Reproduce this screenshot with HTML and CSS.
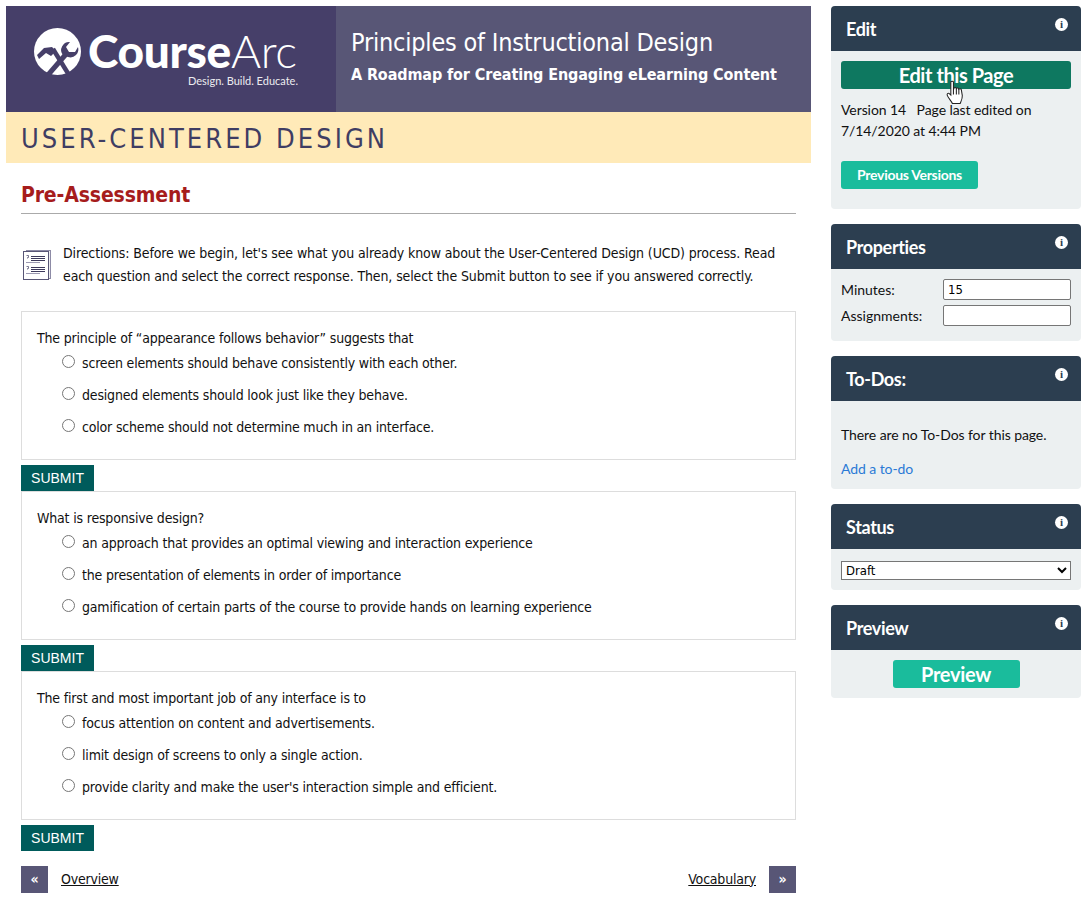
FILE: index.html
```html
<!DOCTYPE html>
<html lang="en">
<head>
    <meta charset="UTF-8">
    <meta name="viewport" content="width=device-width, initial-scale=1.0">
    <title>User-Centered Design</title>
    <link rel="stylesheet" href="styles.css">
</head>
<body>
    <main class="content">
        <header class="banner">
            <div class="logo-block">
                <svg class="logo-mark" viewBox="0 0 47 47" aria-hidden="true">
                    <circle cx="23.5" cy="23.5" r="23.5" fill="#fff"/>
                    <path d="M19 21 L35 47" stroke="#463f69" stroke-width="4.5" fill="none"/>
                    <path d="M3 27 L10 20 L18 19 L22 23 L17 28 L12 25 L5 31 Z" fill="#463f69"/>
                    <path d="M14 47 L33 25" stroke="#463f69" stroke-width="5" fill="none"/>
                    <path d="M29 27 A8 8 0 0 1 36 14 L32 19 L35 24 L41 24 L44 19 A8 8 0 0 1 34 29 Z" fill="#463f69"/>
                </svg>
                <div class="logo-words">
                    <div class="logo-name"><b>Course</b>Arc</div>
                    <div class="logo-tag">Design. Build. Educate.</div>
                </div>
            </div>
            <div class="title-block">
                <h1>Principles of Instructional Design</h1>
                <p>A Roadmap for Creating Engaging eLearning Content</p>
            </div>
        </header>
        <div class="section-band">USER-CENTERED DESIGN</div>

        <div class="page">
            <h2>Pre-Assessment</h2>

            <div class="directions">
                <svg class="directions-icon" viewBox="0 0 28 30" aria-hidden="true">
                    <rect x="3.5" y="0.5" width="24" height="28" fill="#eeeef3" stroke="#8d8ba6"/>
                    <rect x="0.5" y="1.5" width="25" height="28" fill="#fff" stroke="#585676"/>
                    <path d="M8 6.5h14M8 8.5h14M8 10.5h14M8 17.5h14M8 19.5h14M8 21.5h14" stroke="#3d3a5c"/>
                    <path d="M3 12.5h14M3 23.5h14" stroke="#9c9ab2"/>
                    <path d="M3.5 5.5h2v2h-1v1M3.5 16.5h2v2h-1v1" stroke="#585676" fill="none" stroke-width="0.8"/>
                </svg>
                <p>Directions: Before we begin, let's see what you already know about the User-Centered Design (UCD) process. Read each question and select the correct response. Then, select the Submit button to see if you answered correctly.</p>
            </div>

            <section class="question">
                <p>The principle of “appearance follows behavior” suggests that</p>
                <label class="option"><input type="radio" name="q1"><span>screen elements should behave consistently with each other.</span></label>
                <label class="option"><input type="radio" name="q1"><span>designed elements should look just like they behave.</span></label>
                <label class="option"><input type="radio" name="q1"><span>color scheme should not determine much in an interface.</span></label>
            </section>
            <button class="submit">SUBMIT</button>

            <section class="question">
                <p>What is responsive design?</p>
                <label class="option"><input type="radio" name="q2"><span>an approach that provides an optimal viewing and interaction experience</span></label>
                <label class="option"><input type="radio" name="q2"><span>the presentation of elements in order of importance</span></label>
                <label class="option"><input type="radio" name="q2"><span>gamification of certain parts of the course to provide hands on learning experience</span></label>
            </section>
            <button class="submit">SUBMIT</button>

            <section class="question">
                <p>The first and most important job of any interface is to</p>
                <label class="option"><input type="radio" name="q3"><span>focus attention on content and advertisements.</span></label>
                <label class="option"><input type="radio" name="q3"><span>limit design of screens to only a single action.</span></label>
                <label class="option"><input type="radio" name="q3"><span>provide clarity and make the user's interaction simple and efficient.</span></label>
            </section>
            <button class="submit">SUBMIT</button>

            <nav class="pager">
                <div class="pager-side">
                    <a class="pager-btn" href="#">«</a>
                    <a class="pager-link" href="#">Overview</a>
                </div>
                <div class="pager-side">
                    <a class="pager-link" href="#">Vocabulary</a>
                    <a class="pager-btn" href="#">»</a>
                </div>
            </nav>
        </div>
    </main>

    <aside class="sidebar">
        <div class="panel">
            <div class="panel-head"><h3>Edit</h3><span class="info">i</span></div>
            <div class="panel-body edit-body">
                <div class="edit-wrap">
                    <a class="btn btn-dark btn-wide" href="#">Edit this Page</a>
                    <svg class="cursor" viewBox="0 0 17 24" aria-hidden="true">
                        <path d="M4.5 2 C4.5 .8 7 .8 7 2 L7 9.5 L7.5 7.8 C8 7 9.6 7 9.8 8.2 C10.3 7.4 12 7.5 12.2 8.7 C12.8 8 14.4 8.3 14.6 9.5 L15.5 15 C15.7 18 14.5 20 13.5 22.5 L6 22.5 C5 20 2 17.5 1 14.5 C.6 13 2.2 12.2 3 13 L4.5 14.5 Z" fill="#fff" stroke="#222" stroke-width="1"/>
                        <path d="M7 9.5 V14 M9.8 8.2 V14 M12.2 8.7 V14" stroke="#222" stroke-width="1" fill="none"/>
                    </svg>
                </div>
                <p class="version">Version 14 &nbsp; Page last edited on<br>7/14/2020 at 4:44 PM</p>
                <a class="btn btn-small" href="#">Previous Versions</a>
            </div>
        </div>

        <div class="panel">
            <div class="panel-head"><h3>Properties</h3><span class="info">i</span></div>
            <div class="panel-body props">
                <label for="minutes">Minutes:</label>
                <input id="minutes" type="text" value="15">
                <label for="assignments">Assignments:</label>
                <input id="assignments" type="text">
            </div>
        </div>

        <div class="panel">
            <div class="panel-head"><h3>To-Dos:</h3><span class="info">i</span></div>
            <div class="panel-body todos">
                <p>There are no To-Dos for this page.</p>
                <a href="#">Add a to-do</a>
            </div>
        </div>

        <div class="panel">
            <div class="panel-head"><h3>Status</h3><span class="info">i</span></div>
            <div class="panel-body status">
                <select><option>Draft</option></select>
            </div>
        </div>

        <div class="panel">
            <div class="panel-head"><h3>Preview</h3><span class="info">i</span></div>
            <div class="panel-body preview">
                <a class="btn btn-preview" href="#">Preview</a>
            </div>
        </div>
    </aside>
</body>
</html>
```

FILE: styles.css
```css
* { box-sizing: border-box; }
body { margin: 0; padding: 6px 6px 0; display: flex; gap: 20px; align-items: flex-start; font-family: "DejaVu Sans Condensed", "Noto Sans", sans-serif; font-size: 14px; color: #111; background: #fff; }
p { margin: 0; }

.content { width: 805px; flex: none; }
.banner { display: flex; height: 106px; color: #fff; }
.logo-block { width: 330px; background: #463f69; display: flex; padding: 22px 0 0 28px; gap: 7px; }
.logo-mark { width: 47px; height: 47px; flex: none; }
.logo-words { font-family: Lato, sans-serif; width: 209px; flex: none; }
.logo-name { height: 46px; font-size: 46px; line-height: 46px; font-weight: 300; letter-spacing: -0.3px; white-space: nowrap; }
.logo-name b { font-weight: 900; }
.logo-tag { font-size: 11px; line-height: 14px; text-align: right; opacity: .9; margin-right: -1px; }
.title-block { flex: 1; background: #585676; padding: 20px 15px 0; }
.title-block h1 { margin: 0; font-size: 25px; line-height: 34px; font-weight: 400; letter-spacing: -0.2px; }
.title-block p { font-size: 16px; line-height: 24px; font-weight: 700; margin-top: 3px; letter-spacing: -0.12px; }
.section-band { height: 51px; background: #ffeab8; color: #3f3d63; font-size: 27px; line-height: 53px; letter-spacing: 3.05px; padding-left: 15px; }

.page { padding: 0 15px; }
h2 { margin: 0; height: 51px; padding-top: 18px; font-size: 21px; line-height: 28px; color: #a61c1c; font-weight: 700; letter-spacing: -0.15px; border-bottom: 1px solid #aaa; }
.directions { display: flex; gap: 12px; padding: 28px 0 23px 2px; line-height: 23px; letter-spacing: -0.115px; }
.directions-icon { width: 28px; height: 30px; flex: none; margin-top: 8px; }

.question { border: 1px solid #ddd; padding: 16px 15px 15px; height: 149px; letter-spacing: -0.18px; }
.question p { line-height: 20px; margin-bottom: -1px; }
.option { display: flex; align-items: center; height: 32px; padding-left: 25px; }
.option input { margin: 0 7px 3px 0; width: 13px; height: 13px; }
.submit { display: block; margin: 5px 0 0; width: 73px; height: 26px; padding: 0; border: none; background: #005b5b; color: #fff; font-family: "Liberation Sans", sans-serif; font-size: 14px; }

.pager { display: flex; justify-content: space-between; margin-top: 15px; }
.pager-side { display: flex; align-items: center; gap: 13px; }
.pager-btn { width: 27px; height: 27px; background: #585676; color: #fff; font-weight: 700; text-align: center; line-height: 27px; text-decoration: none; }
.pager-link { color: #111; letter-spacing: -0.2px; margin-bottom: 2px; }

.sidebar { width: 250px; flex: none; display: flex; flex-direction: column; gap: 15px; font-family: Lato, sans-serif; }
.panel { border-radius: 4px; background: #ecf0f1; overflow: hidden; }
.panel-head { height: 45px; background: #2c3e50; color: #fff; display: flex; justify-content: space-between; padding: 12px 13px 0 15px; }
.panel-head h3 { margin: 0; font-size: 18px; line-height: 22px; font-weight: 700; letter-spacing: -0.35px; }
.info { width: 13px; height: 13px; border-radius: 50%; background: #fff; color: #2c3e50; font-family: "Liberation Serif", serif; font-weight: 700; font-size: 11px; line-height: 13px; text-align: center; }
.panel-body { padding: 10px; }

.btn { display: block; border-radius: 3px; color: #fff; font-weight: 700; text-align: center; text-decoration: none; background: #1abc9c; }
.btn-wide { height: 28px; line-height: 28px; font-size: 20px; letter-spacing: -0.43px; }
.btn-dark { background: #0e7860; }
.edit-wrap { position: relative; }
.cursor { position: absolute; left: 105px; top: 19px; width: 18px; height: 25px; }
.edit-body { height: 158px; }
.version { margin-top: 10px; line-height: 21px; font-size: 14px; letter-spacing: -0.08px; }
.btn-small { width: 137px; height: 28px; line-height: 28px; font-size: 14px; letter-spacing: -0.3px; margin-top: 20px; }

.props { display: grid; grid-template-columns: 102px 128px; row-gap: 5px; align-items: center; padding-bottom: 15px; }
.props input { width: 128px; height: 21px; padding: 1px 4px; border: 1px solid #767676; border-radius: 2px; font-family: "DejaVu Sans Condensed", sans-serif; font-size: 13px; }

.todos { height: 88px; padding-top: 24px; line-height: 20px; font-size: 14px; letter-spacing: -0.08px; }
.todos a { display: block; margin-top: 14px; color: #2a7ad6; text-decoration: none; }

.status { height: 41px; padding-top: 12px; }
.status select { display: block; width: 230px; height: 19px; font-family: "DejaVu Sans Condensed", sans-serif; font-size: 13px; padding: 0; background: #fff; border: 1px solid #767676; }

.preview { height: 48px; }
.btn-preview { width: 127px; height: 28px; line-height: 28px; font-size: 20px; letter-spacing: -0.3px; margin: 0 auto; }
```
